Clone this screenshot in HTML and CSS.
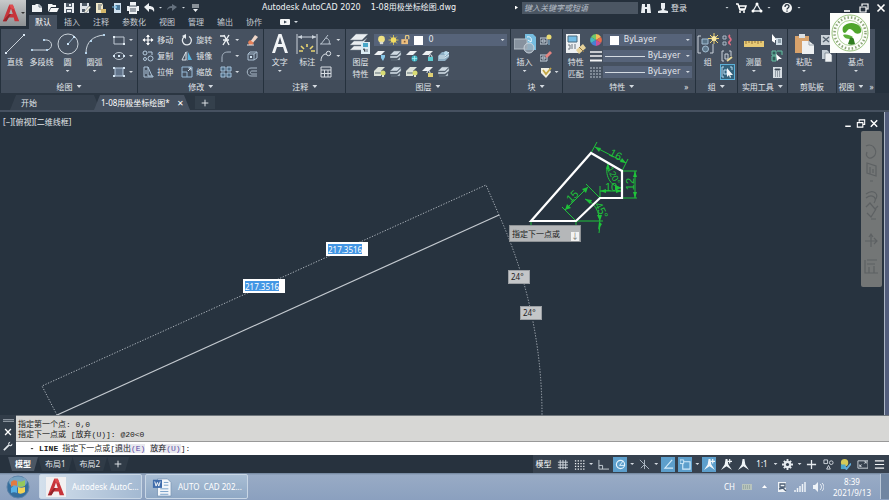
FILE: index.html
```html
<!DOCTYPE html>
<html lang="zh-CN">
<head>
<meta charset="utf-8">
<meta name="viewport" content="width=device-width, initial-scale=1">
<title>Autodesk AutoCAD 2020</title>
<link rel="stylesheet" href="styles.css">
</head>
<body>
<svg class="sprite" aria-hidden="true">
  <symbol id="new" viewBox="0 0 12 12"><path d="M1 3h3l1-1h3l3 3v5H1z" fill="#eef1f4"/><path d="M8 2v3h3" fill="none" stroke="#6b7684"/></symbol>
  <symbol id="open" viewBox="0 0 12 12"><path d="M1 10V2h4l1 1h3v2H4z" fill="#f4f5f6"/><path d="M4 6h8l-2 4H2z" fill="#f4f5f6"/></symbol>
  <symbol id="save" viewBox="0 0 12 12"><path d="M1 1h10v10H1z" fill="#e9edf1"/><path d="M3 1h6v4H3zM3 7h6v4H3z" fill="#4d5966"/><path d="M6 2h2v2H6zM4 8h4v2H4z" fill="#e9edf1"/></symbol>
  <symbol id="saveas" viewBox="0 0 12 12"><path d="M1 1h9v10H1z" fill="#dfe4e9"/><path d="M3 1h5v3H3zM3 7h3v3H3z" fill="#4d5966"/><path d="M5 10l5-6 2 1-5 6z" fill="#f2f0df" stroke="#4d5966" stroke-width=".5"/></symbol>
  <symbol id="webopen" viewBox="0 0 12 12"><path d="M1 1h6l1 2v8H1z" fill="#f0e8c9"/><path d="M3 3h4M3 5h3M3 7h3" stroke="#59636e"/><path d="M6 7h5v4H6z" fill="#d4b76a"/></symbol>
  <symbol id="websave" viewBox="0 0 12 12"><path d="M3 1h7v10H3z" fill="#cfe0ee"/><path d="M5 3h4v5H5z" fill="#4c7898"/><path d="M1 5h5M4 3l2 2-2 2" fill="none" stroke="#75b7df"/></symbol>
  <symbol id="print" viewBox="0 0 12 12"><path d="M3 0h6v4H3zM0 4h12v5H0zM2 8h8v4H2z" fill="#eef1f4"/><path d="M2 4h8M3 9h6M3 7h6" stroke="#485462"/></symbol>
  <symbol id="undo" viewBox="0 0 12 12"><path d="M1 5l5-4v3c4 0 6 2 5 6-1-2-2-3-5-3v3z" fill="#eef1f4"/></symbol>
  <symbol id="redo" viewBox="0 0 12 12"><path d="M11 5L6 2v2C3 4 1 6 1 8c2-2 3-2 5-2v3z" fill="#65717e"/></symbol>
  <symbol id="more" viewBox="0 0 12 12"><path d="M3 3h7M3 5h7" stroke="#eef1f4"/><path d="M4 7h5l-2.500 3z" fill="#eef1f4"/></symbol>
  <symbol id="find" viewBox="0 0 12 12"><path d="M2 2h3v3h2V2h3l1 9H7V7H5v4H1z" fill="#e9edf1"/></symbol>
  <symbol id="user" viewBox="0 0 12 12"><path d="M4 1h4v5l-1 2 4 1v2H1V9l4-1-1-2z" fill="#e9edf1"/></symbol>
  <symbol id="cart" viewBox="0 0 12 12"><path d="M1 2h2l2 6h5M3 4h8l-1 3H4" fill="none" stroke="#fff" stroke-width="1.500"/><circle cx="5" cy="10" r="1" fill="#fff"/><circle cx="9" cy="10" r="1" fill="#fff"/></symbol>
  <symbol id="app" viewBox="0 0 12 12"><path d="M6 2L2 9h8z" fill="none" stroke="#e9edf1" stroke-width="1.300"/><circle cx="6" cy="2" r="1.500" fill="#fff"/><circle cx="2" cy="9" r="1.500" fill="#fff"/><circle cx="10" cy="9" r="1.500" fill="#fff"/></symbol>
  <symbol id="help" viewBox="0 0 12 12"><circle cx="6" cy="6" r="5" fill="#f4f5f6"/><path d="M4 5c0-3 4-3 4-.500C8 6 6 6 6 7.500M6 8.500v1.200" fill="none" stroke="#27323e" stroke-width="1.300"/></symbol>
  <symbol id="min" viewBox="0 0 12 12"><path d="M3 9h6" stroke="#fff" stroke-width="1.600"/></symbol>
  <symbol id="restore" viewBox="0 0 12 12"><path d="M4 4V2h6v5H8M2 5h6v5H2z" fill="none" stroke="#fff" stroke-width="1.200"/></symbol>
  <symbol id="close" viewBox="0 0 12 12"><path d="M2.500 2.500l7 7M9.500 2.500l-7 7" stroke="#fff" stroke-width="1.600"/></symbol>
  <symbol id="cam" viewBox="0 0 12 12"><rect x="1" y="3" width="10" height="6" rx="1" fill="#f4f5f6"/><path d="M5 4.500l3 1.500-3 1.500z" fill="#3a4653"/></symbol>

  <symbol id="line" viewBox="0 0 22 22"><path d="M2 20L20 2" stroke="#c9d1d9"/><path d="M1 19h2v2H1zM19 1h2v2h-2z" fill="#dce9f5"/></symbol>
  <symbol id="pline" viewBox="0 0 22 22"><path d="M1 17h15c6-1 6-9 0-10h-3" fill="none" stroke="#c9d1d9"/><path d="M0 16h2v2H0zM15 16h2v2h-2zM12 6h2v2h-2z" fill="#b4d2ea"/></symbol>
  <symbol id="circle" viewBox="0 0 22 22"><circle cx="11" cy="11" r="10" fill="none" stroke="#c9d1d9"/><path d="M11 11l6-7" stroke="#9ebcd4"/><path d="M10 10h2v2h-2zM16 3h2v2h-2z" fill="#cde6fa"/></symbol>
  <symbol id="arc" viewBox="0 0 22 22"><path d="M2 20C2 9 9 3 20 2" fill="none" stroke="#c9d1d9"/><path d="M1 19h2v2H1zM6 7h2v2H6zM19 1h2v2h-2z" fill="#b4d2ea"/></symbol>
  <symbol id="rect" viewBox="0 0 12 12"><path d="M1 3h10v7H1z" fill="none" stroke="#c0cad4"/><path d="M0 2h2v2H0zM10 9h2v2h-2z" fill="#e3edf5"/></symbol>
  <symbol id="ellipse" viewBox="0 0 12 12"><ellipse cx="6" cy="6" rx="5" ry="3.500" fill="none" stroke="#c0cad4"/><path d="M5 5h2v2H5zM0 5h2v2H0zM10 5h2v2h-2z" fill="#d5e6f4"/></symbol>
  <symbol id="hatch" viewBox="0 0 12 12"><path d="M2 2h8v8H2z" fill="#61738a" stroke="#b3c6d9"/><path d="M0 1h2v2H0zM10 1h2v2h-2zM0 9h2v2H0zM10 9h2v2h-2z" fill="#d5e6f4"/></symbol>
  <symbol id="move" viewBox="0 0 12 12"><path d="M6 1v10M1 6h10" stroke="#fff" stroke-width="1.200"/><path d="M4 3l2-2.500L8 3zM4 9l2 2.500L8 9zM3 4L.5 6 3 8zM9 4l2.500 2L9 8z" fill="#fff"/></symbol>
  <symbol id="rotate" viewBox="0 0 12 12"><path d="M8 2.500A4.500 4.500 0 1 1 3 3" fill="none" stroke="#e5eaee" stroke-width="1.300"/><path d="M5 0v5L1 2z" fill="#e5eaee"/></symbol>
  <symbol id="copy" viewBox="0 0 12 12"><g fill="none" stroke="#b6ccdf"><circle cx="3" cy="3" r="2"/><circle cx="8.500" cy="8.500" r="2.500"/><circle cx="3" cy="9" r="1.500"/><path d="M6 2h4v3"/></g></symbol>
  <symbol id="mirror" viewBox="0 0 12 12"><path d="M5 2v8H1z" fill="none" stroke="#dce3e9"/><path d="M7 2v8h4z" fill="#56b4df"/><path d="M6 1v10" stroke="#b7c7d4" stroke-width=".6"/></symbol>
  <symbol id="stretch" viewBox="0 0 12 12"><path d="M2 1h4v9h5v1H2zM6 1l4 9M4 4v4" fill="none" stroke="#aec6db"/></symbol>
  <symbol id="scale" viewBox="0 0 12 12"><path d="M1 1h10v10H1zM1 6h5v5" fill="none" stroke="#95bad7"/><path d="M7 5l3-3M7.500 2H10v2.500" stroke="#d5e6f4" fill="none"/></symbol>
  <symbol id="trim" viewBox="0 0 12 12"><path d="M0 2h4M4 1l5 10M9 1L6 6l-3 5M3 6h6" fill="none" stroke="#edf1f4" stroke-width="1.400"/></symbol>
  <symbol id="fillet" viewBox="0 0 12 12"><path d="M2 12V8c0-4 2-6 6-6h3" fill="none" stroke="#aab8c6"/></symbol>
  <symbol id="array" viewBox="0 0 12 12"><path d="M1 1h4v4H1zM7 1h4v4H7zM1 7h4v4H1zM7 7h4v4H7z" fill="#4d6b84" stroke="#a4c2db"/></symbol>
  <symbol id="erase" viewBox="0 0 12 12"><path d="M4 8l5-7 3 2-6 7z" fill="#eed6c8"/><path d="M2 8l2-2 4 3-2 2H3z" fill="#e47f58"/><path d="M1 11h7" stroke="#e8e8e8"/></symbol>
  <symbol id="explode" viewBox="0 0 12 12"><path d="M2 4h6v6H2zM2 4l2-2h7l-3 2M11 2v6l-3 2" fill="none" stroke="#a9bed0"/><path d="M4 6h2v2H4z" fill="#d4e6f4"/></symbol>
  <symbol id="offset" viewBox="0 0 12 12"><path d="M11 2H5C0 2 0 10 5 10h6M11 5H6C4 5 4 8 6 8h5" fill="none" stroke="#a9b9c8"/></symbol>
  <symbol id="text" viewBox="0 0 22 22"><path d="M3 20L9.500 1h3L19 20h-3l-2-6H8l-2 6zm6-9h4l-2-7z" fill="#f1f4f6"/></symbol>
  <symbol id="dim" viewBox="0 0 22 22"><path d="M1 1v20M21 1v20M2 4h18" stroke="#cbd3db"/><path d="M2 4l4-2v4zM20 4l-4-2v4z" fill="#cbd3db"/><path d="M11 11v3M5 13l3 3M17 13l-3 3M3 18h4M15 18h4" stroke="#e9d572" stroke-width="1.600"/></symbol>
  <symbol id="angular" viewBox="0 0 12 12"><path d="M1 10L8 1M0 10h11M6 4c3 1 4 3 3 6" fill="none" stroke="#b9c4cf"/></symbol>
  <symbol id="leader" viewBox="0 0 12 12"><path d="M1 11c0-4 2-7 5-7" fill="none" stroke="#dce2e8"/><circle cx="8.500" cy="3.500" r="2.200" fill="none" stroke="#dce2e8"/></symbol>
  <symbol id="table" viewBox="0 0 12 12"><path d="M1 1h10v10H1zM1 4h10M1 7.500h10M4.500 4v7M8 4v7" fill="none" stroke="#d7dde3"/></symbol>
  <symbol id="layers" viewBox="0 0 22 22"><path d="M1 7l6-6h12l-6 6zM1 12l4-4h9l4-3-5 7zM1 17l4-4h8v4z" fill="#e9edf0" stroke="#7b8793" stroke-width=".5"/><path d="M12 9h9v12h-9z" fill="#dcecf4"/><path d="M14 10h5v4h-5z" fill="#48a7c9"/><path d="M14 16h2v3M18 16v3" stroke="#687581"/></symbol>
  <symbol id="bulb" viewBox="0 0 12 12"><circle cx="6" cy="5" r="4" fill="#f0e283"/><path d="M4 8h4v3H4z" fill="#d9dad1"/></symbol>
  <symbol id="sun" viewBox="0 0 12 12"><path d="M6 0v12M0 6h12M2 2l8 8M10 2l-8 8" stroke="#dec95a"/><circle cx="6" cy="6" r="3.300" fill="#f2dc62"/></symbol>
  <symbol id="lock" viewBox="0 0 12 12"><path d="M6 5V2c0-2 4-2 4 0v3" fill="none" stroke="#e6c880" stroke-width="1.500"/><path d="M1 5h8v6H1z" fill="#eec080"/><path d="M4 7h2v2H4z" fill="#845d33"/></symbol>
  <symbol id="layA" viewBox="0 0 12 12"><path d="M0 5l4-4h7L7 5z" fill="#edf1f3"/><path d="M7 5h4v2L9 11 7 8z" fill="#87c8e9"/></symbol>
  <symbol id="layB" viewBox="0 0 12 12"><path d="M0 5l4-4h7L7 5zM0 8V6h7l4-4v3L7 8zM1 10h6l3-3v3H2z" fill="#cfdae3" stroke="#647583" stroke-width=".5"/></symbol>
  <symbol id="layC" viewBox="0 0 12 12"><path d="M0 5l4-4h7L7 5z" fill="#edf1f3"/><circle cx="8.500" cy="8.500" r="3" fill="#43b8c8"/><path d="M8.500 6v5M6 8.500h5" stroke="#b3f1f2" stroke-width=".7"/></symbol>
  <symbol id="layD" viewBox="0 0 12 12"><path d="M0 5l4-4h7L7 5z" fill="#edf1f3"/><path d="M6 7h5v4H6z" fill="#5ccbd1"/><path d="M7 7c0-3 3-3 3 0" stroke="#e6eef2" fill="none"/></symbol>
  <symbol id="layE" viewBox="0 0 12 12"><path d="M0 6l4-4h7v5l-4 4H0z" fill="#8daec4"/><path d="M1 6h6l4-4M1 8h6l4-3" stroke="#d9e9f2" fill="none"/><circle cx="8" cy="3" r="2" fill="#b6d8eb"/></symbol>
  <symbol id="layF" viewBox="0 0 12 12"><path d="M0 5l4-4h7L7 5v5H0z" fill="#dce2da"/><path d="M1 7h6" stroke="#5c6c73"/><circle cx="9" cy="7" r="2.500" fill="#d9dc75"/><path d="M8 9h2v2H8z" fill="#e0e2ce"/></symbol>
  <symbol id="layG" viewBox="0 0 12 12"><path d="M0 5l4-4h7L7 5z" fill="#edf1f3"/><path d="M6 7h5v4H6z" fill="#dfd075"/><path d="M5 7c0-3 3-3 3 0" stroke="#e6eef2" fill="none"/></symbol>
  <symbol id="insert" viewBox="0 0 22 22"><path d="M11 1h8l3 3v13H11z" fill="#76bde0"/><path d="M0 6h13v10H0z" fill="#87929f" stroke="#b3bec7"/><circle cx="15" cy="15" r="5" fill="#9ca9b6" fill-opacity=".75" stroke="#c9d3dc"/><path d="M13 4c4-1 5 2 4 5l-3-2" fill="none" stroke="#eff8fd"/></symbol>
  <symbol id="blkA" viewBox="0 0 12 12"><path d="M0 4h7v6H0zM2 6h3v2H2z" fill="none" stroke="#c6d1db"/><circle cx="9" cy="3" r="2.500" fill="#eadb74"/><path d="M9 6v5" stroke="#87bee0"/></symbol>
  <symbol id="blkB" viewBox="0 0 12 12"><path d="M0 5h7v6H0zM2 7h3v2H2z" fill="none" stroke="#c6d1db"/><path d="M5 6l5-5 2 2-5 5z" fill="#e48480"/></symbol>
  <symbol id="blkC" viewBox="0 0 12 12"><path d="M1 2h8l2 4-5 6-5-5z" fill="#f1efe2"/><path d="M3 4l3 4 5-6" fill="none" stroke="#c4a747" stroke-width="1.800"/></symbol>
  <symbol id="match" viewBox="0 0 22 22"><path d="M1 1h14v19H1z" fill="#edf0f2"/><path d="M3 3h9v6H3z" fill="#73bce4" stroke="#4a687d"/><path d="M3 12h2v4H3M7 11v5M10 11v5" stroke="#6a747e" fill="none"/><path d="M11 17l7-6 3 4-7 6z" fill="#e7d29a"/><path d="M14 14l5 5" stroke="#927441"/></symbol>
  <symbol id="wheel" viewBox="0 0 12 12"><path d="M6 6V0a6 6 0 0 1 5 3z" fill="#f4bd59"/><path d="M6 6l5-3a6 6 0 0 1 0 6z" fill="#e96c48"/><path d="M6 6l5 3a6 6 0 0 1-5 3z" fill="#c95198"/><path d="M6 6v6a6 6 0 0 1-5-3z" fill="#477fd4"/><path d="M6 6L1 9a6 6 0 0 1 0-6z" fill="#44bac1"/><path d="M6 6L1 3a6 6 0 0 1 5-3z" fill="#74c769"/></symbol>
  <symbol id="weight" viewBox="0 0 12 12"><path d="M0 2h12M0 6h12" stroke="#f3f4f5" stroke-width="1.500"/><path d="M0 10.500h12" stroke="#f3f4f5" stroke-width="2"/></symbol>
  <symbol id="ltype" viewBox="0 0 12 12"><path d="M0 2h12M0 5h12M0 8h12M0 11h12" stroke="#bac4ce" stroke-dasharray="2 1"/></symbol>
  <symbol id="group" viewBox="0 0 22 22"><path d="M4 3H1v17h3M13 20h3V11" fill="none" stroke="#cbd3db"/><path d="M5 6h6v5H5z" fill="#5b7588" stroke="#a4bfd3"/><circle cx="8.500" cy="16" r="3" fill="#60798c" stroke="#a4bfd3"/><path d="M17 0v11M11 5.500h11M13 2l8 8M21 2l-8 8" stroke="#f0d36f"/><circle cx="17" cy="5.500" r="2.500" fill="#f8e8a2"/></symbol>
  <symbol id="grpA" viewBox="0 0 12 12"><path d="M2 2h3v3H2zM2 8h3v3H2z" fill="none" stroke="#aabac7"/><path d="M9 1c-3 2 3 4 0 6s1 3 0 4" fill="none" stroke="#dd6e83" stroke-width="1.800"/></symbol>
  <symbol id="grpB" viewBox="0 0 12 12"><path d="M3 1H1v10h2M8 1h2v5M4 4h3v5H4z" fill="none" stroke="#c9d1d9"/><path d="M6 11l5-4" stroke="#e9d998" stroke-width="1.800"/></symbol>
  <symbol id="grpC" viewBox="0 0 12 12"><path d="M3 1H1v10h2M9 1h2v3M3 4h3v4H3z" fill="none" stroke="#b6d9f1"/><path d="M6 2v9l2-2 1 3 1-1-1-2h3z" fill="#f5f7f8"/></symbol>
  <symbol id="measure" viewBox="0 0 22 22"><path d="M1 8h20v6H1z" fill="#e8ca75"/><path d="M3 8v3M6 8v2M9 8v3M12 8v2M15 8v3M18 8v2" stroke="#93733b"/></symbol>
  <symbol id="utilA" viewBox="0 0 12 12"><path d="M1 0l5 6H4v3L1 7z" fill="#fff"/><path d="M5 4h6v7H5z" fill="#cbd9e3"/><path d="M7 6h3M7 8h3" stroke="#4e616f"/></symbol>
  <symbol id="utilB" viewBox="0 0 12 12"><path d="M1 1h4v4H1zM6 1h5v4M1 6h4v5H1z" fill="#335e5b" stroke="#69bfa4"/><path d="M5 4l6 5H8l-2 2z" fill="#fff"/></symbol>
  <symbol id="calc" viewBox="0 0 12 12"><path d="M2 1h9v11H2z" fill="#d8dee4"/><path d="M4 3h5v1H4zM4 6h1M6 6h1M8 6h1M4 8h1M6 8h1M8 8h1M4 10h1M6 10h1M8 10h1" stroke="#4d5b68"/></symbol>
  <symbol id="paste" viewBox="0 0 22 22"><path d="M2 3h14v17H2z" fill="#d8a26b"/><path d="M6 1h6v4H6z" fill="#dce0e3"/><path d="M9 8h7l5 4v9H9z" fill="#eef0f1"/><path d="M16 8v4h5" fill="none" stroke="#9ca5ad"/></symbol>
  <symbol id="cut" viewBox="0 0 12 12"><path d="M0 1h9v10H0z" fill="#cbd2d9"/><path d="M2 3l6 5M8 3L2 8" stroke="#53606d" stroke-width="1.300"/></symbol>
  <symbol id="copyclip" viewBox="0 0 12 12"><path d="M1 0h5l2 2v7H1z" fill="#c4cdd5"/><path d="M4 3h5l2 2v7H4z" fill="#eef1f3" stroke="#596673" stroke-width=".6"/></symbol>

  <symbol id="grid" viewBox="0 0 12 12"><path d="M3.500 1v10M6.500 1v10M9.500 1v10M1 3.500h11M1 6.500h11M1 9.500h11" stroke="#d4dbe1"/></symbol>
  <symbol id="dots" viewBox="0 0 12 12"><path d="M1 2h11M1 5h11M1 8h11M1 11h11" stroke="#eef1f3" stroke-width="1.400" stroke-dasharray="1.400 1.600"/></symbol>
  <symbol id="ortho" viewBox="0 0 12 12"><path d="M1 1v10h11M1 7h4v4" fill="none" stroke="#cbd3da"/></symbol>
  <symbol id="polar" viewBox="0 0 12 12"><circle cx="6" cy="6" r="4.500" fill="none" stroke="#e5f3fc" stroke-width="1.200"/><path d="M5 7h6M5 7l4-5" stroke="#e5f3fc"/></symbol>
  <symbol id="iso" viewBox="0 0 12 12"><path d="M1 1l10 10M6 1v10M6 6l-4 4" stroke="#b1bdc8"/></symbol>
  <symbol id="track" viewBox="0 0 12 12"><path d="M10 1L2 10h9" fill="none" stroke="#d4ecfa" stroke-width="1.200"/></symbol>
  <symbol id="osnap" viewBox="0 0 12 12"><path d="M3 3h8v8H3z" fill="none" stroke="#d4ecfa" stroke-width="1.200"/><path d="M0 1h4v4H0z" fill="#5d9fcc" stroke="#d4ecfa"/></symbol>
  <symbol id="anno" viewBox="0 0 12 12"><path d="M5 0h2l1 6 4 6-6-4-6 4 4-6z" fill="#f1f6f9"/></symbol>
  <symbol id="annoAuto" viewBox="0 0 12 12"><path d="M5 0h2l1 6 4 6-6-4-6 4 4-6z" fill="#f1f6f9"/><path d="M9.500 0v5M7 2.500h5" stroke="#f1f6f9" stroke-width="1.300"/></symbol>
  <symbol id="gear" viewBox="0 0 12 12"><path d="M6 0v12M0 6h12M2 2l8 8M10 2l-8 8" stroke="#e5eaee" stroke-width="2"/><circle cx="6" cy="6" r="4" fill="#e5eaee"/><circle cx="6" cy="6" r="1.700" fill="#35414e"/></symbol>
  <symbol id="plus" viewBox="0 0 12 12"><path d="M6 1v10M1 6h10" stroke="#e5eaee" stroke-width="1.400"/></symbol>
  <symbol id="isolate" viewBox="0 0 12 12"><path d="M1 1h4v4H1zM4 11l2-4 2 4z" fill="none" stroke="#d4dbe1"/><circle cx="9" cy="4" r="2" fill="none" stroke="#d4dbe1"/></symbol>
  <symbol id="perf" viewBox="0 0 12 12"><circle cx="5" cy="4" r="4" fill="#d5ca58"/><path d="M1 6h5v5H1z" fill="#4ba6c8"/><path d="M5 8l2 3 5-6" fill="none" stroke="#5faad9" stroke-width="2"/></symbol>
  <symbol id="full" viewBox="0 0 12 12"><path d="M1 2h11v8H1z" fill="none" stroke="#d4dbe1"/><path d="M3 8l2-2M8 5l2-2M3 6v2h2M8 3h2v2" fill="none" stroke="#d4dbe1"/></symbol>
  <symbol id="menu" viewBox="0 0 12 12"><path d="M1 2h10M1 6h10M1 10h10" stroke="#f3f5f6" stroke-width="1.300"/></symbol>
  <symbol id="wrench" viewBox="0 0 12 12"><path d="M1 11l6-6" stroke="#e5eaee" stroke-width="2"/><path d="M9 1C5 1 6 6 8 6c2 1 4-1 3-3L9 5 7 4z" fill="#e5eaee"/></symbol>
  <symbol id="keyb" viewBox="0 0 12 12"><path d="M1 3h10v6H1z" fill="#b8c4bd"/><path d="M2 5h8M2 7h8" stroke="#7f928f" stroke-dasharray="1 1"/></symbol>
  <symbol id="action" viewBox="0 0 12 12"><path d="M2 1h8v10H2z" fill="#eef2f6"/><path d="M4 3h5v3H4zM3 8l4-1 3 3" stroke="#4e6077" fill="none" stroke-width="1.300"/></symbol>
  <symbol id="signal" viewBox="0 0 12 12"><path d="M1 11V9M3.500 11V7M6 11V5M8.500 11V3M11 11V1" stroke="#edf2f7" stroke-width="1.500"/></symbol>
  <symbol id="vol" viewBox="0 0 12 12"><path d="M1 4h2l3-3v10L3 8H1z" fill="#edf2f7"/><path d="M8 3c2 2 2 4 0 6M10 2c3 3 2 6 0 8" fill="none" stroke="#edf2f7"/></symbol>
  <symbol id="cad" viewBox="0 0 22 22"><path d="M2 20L9 2h4l7 18h-5l-1-4H8l-2 4zM9 12h4l-2-6z" fill="#c7343a"/><path d="M2 20l7-8h2l-5 8z" fill="#94252b"/><path d="M9 2h4l2 5-4-1z" fill="#df4c50"/></symbol>
</svg>

<main class="window">
  <header class="top">
    <button class="logo" aria-label="应用程序菜单"><svg><use href="#cad"/></svg><i class="caret dark"></i></button>
    <div class="titlebar">
      <nav class="quick" aria-label="快速访问">
        <button aria-label="新建"><svg><use href="#new"/></svg></button>
        <button aria-label="打开"><svg><use href="#open"/></svg></button>
        <button aria-label="保存"><svg><use href="#save"/></svg></button>
        <button aria-label="另存为"><svg><use href="#saveas"/></svg></button>
        <button aria-label="从网络打开"><svg><use href="#webopen"/></svg></button>
        <button aria-label="保存到网络"><svg><use href="#websave"/></svg></button>
        <button aria-label="打印"><svg><use href="#print"/></svg></button>
        <button class="wide" aria-label="放弃"><svg><use href="#undo"/></svg><i class="caret"></i></button>
        <button class="wide" aria-label="重做"><svg><use href="#redo"/></svg><i class="caret"></i></button>
        <button aria-label="自定义"><svg><use href="#more"/></svg></button>
      </nav>
      <h1><span>Autodesk AutoCAD 2020</span><span>1-08用极坐标绘图.dwg</span></h1>
      <div class="account">
        <i class="play"></i>
        <input class="search" type="search" placeholder="键入关键字或短语" aria-label="搜索">
        <button aria-label="搜索"><svg><use href="#find"/></svg></button>
        <button class="login"><svg><use href="#user"/></svg>登录</button>
        <button class="drop" aria-label="登录菜单"><i class="caret"></i></button>
        <button class="shop" aria-label="商店"><svg><use href="#cart"/></svg></button>
        <button class="wide" aria-label="应用"><svg><use href="#app"/></svg><i class="caret"></i></button>
        <button class="wide help" aria-label="帮助"><svg><use href="#help"/></svg><i class="caret"></i></button>
        <div class="winctl">
          <button aria-label="最小化"><svg><use href="#min"/></svg></button>
          <button aria-label="还原"><svg><use href="#restore"/></svg></button>
          <button aria-label="关闭"><svg><use href="#close"/></svg></button>
        </div>
      </div>
    </div>
    <nav class="tabs" aria-label="功能区">
      <button class="on">默认</button><button>插入</button><button>注释</button><button>参数化</button><button>视图</button><button>管理</button><button>输出</button><button>协作</button>
      <button class="cam" aria-label="显示面板"><svg><use href="#cam"/></svg><i class="caret"></i></button>
    </nav>
  </header>

  <div class="ribbon">
    <section class="panel draw">
      <div class="body">
        <button class="big"><svg><use href="#line"/></svg>直线</button>
        <button class="big"><svg><use href="#pline"/></svg>多段线</button>
        <button class="big"><svg><use href="#circle"/></svg>圆<i class="caret"></i></button>
        <button class="big"><svg><use href="#arc"/></svg>圆弧<i class="caret"></i></button>
        <div class="stack">
          <button aria-label="矩形"><svg><use href="#rect"/></svg><i class="caret"></i></button>
          <button aria-label="椭圆"><svg><use href="#ellipse"/></svg><i class="caret"></i></button>
          <button aria-label="图案填充"><svg><use href="#hatch"/></svg><i class="caret"></i></button>
        </div>
      </div>
      <h2>绘图<i class="caret big-caret"></i></h2>
    </section>
    <section class="panel modify">
      <div class="body">
        <div class="stack">
          <button><svg><use href="#move"/></svg>移动</button>
          <button><svg><use href="#copy"/></svg>复制</button>
          <button><svg><use href="#stretch"/></svg>拉伸</button>
        </div>
        <div class="stack">
          <button><svg><use href="#rotate"/></svg>旋转</button>
          <button><svg><use href="#mirror"/></svg>镜像</button>
          <button><svg><use href="#scale"/></svg>缩放</button>
        </div>
        <div class="stack">
          <button aria-label="修剪"><svg><use href="#trim"/></svg><i class="caret"></i></button>
          <button aria-label="圆角"><svg><use href="#fillet"/></svg><i class="caret"></i></button>
          <button aria-label="阵列"><svg><use href="#array"/></svg><i class="caret"></i></button>
        </div>
        <div class="stack">
          <button aria-label="删除"><svg><use href="#erase"/></svg></button>
          <button aria-label="分解"><svg><use href="#explode"/></svg></button>
          <button aria-label="偏移"><svg><use href="#offset"/></svg></button>
        </div>
      </div>
      <h2>修改<i class="caret big-caret"></i></h2>
    </section>
    <section class="panel annotate">
      <div class="body">
        <button class="big"><svg><use href="#text"/></svg>文字<i class="caret"></i></button>
        <button class="big"><svg><use href="#dim"/></svg>标注</button>
        <div class="stack">
          <button aria-label="角度"><svg><use href="#angular"/></svg><i class="caret"></i></button>
          <button aria-label="引线"><svg><use href="#leader"/></svg><i class="caret"></i></button>
          <button aria-label="表格"><svg><use href="#table"/></svg></button>
        </div>
      </div>
      <h2>注释<i class="caret big-caret"></i></h2>
    </section>
    <section class="panel layer">
      <div class="body">
        <button class="big"><svg><use href="#layers"/></svg><span>图层<br>特性</span></button>
        <div class="rows">
          <label class="combo"><svg><use href="#bulb"/></svg><svg><use href="#sun"/></svg><svg><use href="#lock"/></svg><i class="swatch"></i><select aria-label="图层"><option>0</option></select><i class="caret"></i></label>
          <div class="icons">
            <button aria-label="关闭图层"><svg><use href="#layA"/></svg></button><button aria-label="隔离"><svg><use href="#layB"/></svg></button><button aria-label="冻结"><svg><use href="#layC"/></svg></button><button aria-label="锁定"><svg><use href="#layD"/></svg></button><button aria-label="置为当前"><svg><use href="#layE"/></svg></button>
          </div>
          <div class="icons">
            <button aria-label="打开图层"><svg><use href="#layF"/></svg></button><button aria-label="取消隔离"><svg><use href="#layB"/></svg></button><button aria-label="解冻"><svg><use href="#layF"/></svg></button><button aria-label="解锁"><svg><use href="#layG"/></svg></button><button aria-label="匹配图层"><svg><use href="#layB"/></svg></button>
          </div>
        </div>
      </div>
      <h2>图层<i class="caret big-caret"></i></h2>
    </section>
    <section class="panel block">
      <div class="body">
        <button class="big"><svg><use href="#insert"/></svg>插入<i class="caret"></i></button>
        <div class="stack">
          <button aria-label="创建块"><svg><use href="#blkA"/></svg></button>
          <button aria-label="编辑块"><svg><use href="#blkB"/></svg></button>
          <button aria-label="编辑属性"><svg><use href="#blkC"/></svg><i class="caret"></i></button>
        </div>
      </div>
      <h2>块<i class="caret big-caret"></i></h2>
    </section>
    <section class="panel props">
      <div class="body">
        <button class="big"><svg><use href="#match"/></svg><span>特性<br>匹配</span></button>
        <div class="stack">
          <button aria-label="颜色"><svg><use href="#wheel"/></svg></button>
          <button aria-label="线宽"><svg><use href="#weight"/></svg></button>
          <button aria-label="线型"><svg><use href="#ltype"/></svg></button>
        </div>
        <div class="rows">
          <label class="combo"><i class="swatch"></i><select aria-label="对象颜色"><option>ByLayer</option></select><i class="caret"></i></label>
          <label class="combo"><i class="rule"></i><select aria-label="对象线宽"><option>ByLayer</option></select><i class="caret"></i></label>
          <label class="combo"><i class="rule"></i><select aria-label="对象线型"><option>ByLayer</option></select><i class="caret"></i></label>
        </div>
      </div>
      <h2>特性<i class="caret big-caret"></i><span class="launch">»</span></h2>
    </section>
    <section class="panel grp">
      <div class="body">
        <button class="big"><svg><use href="#group"/></svg>组</button>
        <div class="stack">
          <button aria-label="解除编组"><svg><use href="#grpA"/></svg></button>
          <button aria-label="组编辑"><svg><use href="#grpB"/></svg></button>
          <button class="hot" aria-label="组选择"><svg><use href="#grpC"/></svg></button>
        </div>
      </div>
      <h2>组<i class="caret big-caret"></i></h2>
    </section>
    <section class="panel util">
      <div class="body">
        <button class="big"><svg><use href="#measure"/></svg>测量<i class="caret"></i></button>
        <div class="stack">
          <button aria-label="快速选择"><svg><use href="#utilA"/></svg></button>
          <button aria-label="全部选择"><svg><use href="#utilB"/></svg></button>
          <button aria-label="计算器"><svg><use href="#calc"/></svg></button>
        </div>
      </div>
      <h2>实用工具<i class="caret big-caret"></i></h2>
    </section>
    <section class="panel clip">
      <div class="body">
        <button class="big"><svg><use href="#paste"/></svg>粘贴<i class="caret"></i></button>
        <div class="stack">
          <button aria-label="剪切"><svg><use href="#cut"/></svg></button>
          <button aria-label="复制到剪贴板"><svg><use href="#copyclip"/></svg></button>
        </div>
      </div>
      <h2>剪贴板</h2>
    </section>
    <section class="panel view">
      <div class="body">
        <button class="big"><svg></svg>基点<i class="caret"></i></button>
      </div>
      <h2>视图<i class="caret big-caret"></i><span class="launch">»</span></h2>
    </section>
  </div>
  <svg class="seal" viewBox="0 0 40 40" role="img" aria-label="徽标">
    <rect width="40" height="40" fill="#fdfefb"/>
    <circle cx="20" cy="20" r="18" fill="none" stroke="#7fb45c" stroke-width=".8"/>
    <circle cx="20" cy="20" r="15.500" fill="none" stroke="#8ea77a" stroke-width="2.500" stroke-dasharray="1.500 2"/>
    <circle cx="20" cy="20" r="12.500" fill="#fff" stroke="#8fc070" stroke-width=".7"/>
    <path d="M13 14c3-4 9-5 13-3 4 1 6 5 5 8-1 2-4 2-6 1-2-2-3-4-6-4-2 1-2 3-4 4-2 0-3-3-2-6z" fill="#4fa52c"/>
    <path d="M13 22c3-1 7 0 10 2l-3 2c-3 0-6-1-7-4z" fill="#5cae3a"/>
    <path d="M20 25c2-1 4 0 4 2l1 4c-2 1-5 1-7 0z" fill="#2f7c1f"/>
  </svg>

  <nav class="files" aria-label="文件">
    <button class="file">开始</button>
    <button class="file on">1-08用极坐标绘图*<span>✕</span></button>
    <button class="add" aria-label="新图形"><svg><use href="#plus"/></svg></button>
  </nav>

  <section class="canvas" aria-label="绘图区">
    <svg class="drawing" viewBox="0 112 889 303" preserveAspectRatio="xMinYMin meet">
      <path d="M57 415L499 215" stroke="#c3c9cf" stroke-width="1.200"/>
      <g fill="none" stroke="#a9b1b9" stroke-dasharray="1.300 1.500">
        <path d="M57 415L42 386 486 185 499 215"/>
        <path d="M499 215A485 485 0 0 1 542 415"/>
      </g>
      <g fill="none" stroke="#1fc23a">
        <path d="M591 153l6-11M622 171l6-12M595 147l31 16M622 171h15M622 198h15M635 171v27M600 198v-12M600 191h22M576 221l-14-14M600 198l-14-14M565 210l23-23M576 221h27M585 199c12 4 17 18 14 34M608 164c-4 10 2 23 14 24M531 221v6M576 221v6"/>
      </g>
      <path d="M595 147l6 1-2 4zM626 163l-6-1 2-4zM635 171l-2 6h4zM635 198l-2-6h4zM600 191l6-2v4zM622 191l-6-2v4zM565 210l2-6 4 4zM588 187l-6 2 4 4zM585 199l7 1-2 4zM600 221l-3-6h5zM608 163l2 7-4-1zM622 188l-7-3v5zM599 222l-1 8 4-6z" fill="#1fc23a"/>
      <g class="dims">
        <text transform="translate(614 158) rotate(28)">16</text>
        <text transform="translate(634 184) rotate(-90)">12</text>
        <text transform="translate(611 191)">10</text>
        <text transform="translate(575 199) rotate(-45)">15</text>
        <text transform="translate(598 212) rotate(63)">45°</text>
        <text class="small" transform="translate(611 177) rotate(62)">120°</text>
      </g>
      <path d="M531 221L591 153 622 171V198H600L576 221z" fill="none" stroke="#fff" stroke-width="2.200"/>
    </svg>
    <span class="viewlabel">[−][俯视][二维线框]</span>
    <div class="docctl">
      <button aria-label="最小化图形"><svg><use href="#min"/></svg></button>
      <button aria-label="还原图形"><svg><use href="#restore"/></svg></button>
      <button aria-label="关闭图形"><svg><use href="#close"/></svg></button>
    </div>
    <svg class="navbar" viewBox="0 0 21 156" role="img" aria-label="导航栏">
      <rect width="21" height="156" rx="2" fill="#737676"/>
      <g fill="none" stroke="#5d6163" stroke-width="1.200">
        <path d="M5 15c8-4 13 7 7 11-4 3-8-1-6-5"/>
        <path d="M6 32l9 3v10l-9-3zM9 36v7M12 38v4M9 50h3"/>
        <path d="M5 63c8-6 14 1 9 6M5 67c6-5 12 0 8 5M5 76l4-4 5 6 3-3M6 82l4 4 5-8M10 88h5"/>
        <path d="M10 103v13M4 110h12M8 106l2-3 2 3M13 107l3 3-3 3"/>
        <path d="M4 129v13h13M6 129h10M6 133h8M8 136v6M13 135v7"/>
      </g>
    </svg>
    <input class="dyn d1" value="217.3516" aria-label="长度">
    <input class="dyn d2" value="217.3516" aria-label="距离">
    <output class="angle a1">24°</output>
    <output class="angle a2">24°</output>
    <div class="tip">指定下一点或<i>↓</i></div>
  </section>

  <section class="command" aria-label="命令行">
    <div class="grip"><i></i><button aria-label="关闭命令行"><svg><use href="#close"/></svg></button><button aria-label="自定义命令行"><svg><use href="#wrench"/></svg></button></div>
    <div class="console">
      <p>指定第一个点: 0,0</p>
      <p>指定下一点或 [放弃(U)]: @20&lt;0</p>
      <label class="prompt"><i class="caret dark"></i><b>LINE</b><span>指定下一点或[<mark>退出<em>(E)</em></mark> <mark>放弃<em>(U)</em></mark>]:</span><input type="text" aria-label="命令"></label>
    </div>
  </section>

  <footer class="status">
    <nav class="layouts" aria-label="布局">
      <button class="on">模型</button><button>布局1</button><button>布局2</button><button aria-label="新建布局"><svg><use href="#plus"/></svg></button>
    </nav>
    <div class="toggles">
      <button class="word">模型</button>
      <button aria-label="栅格"><svg><use href="#grid"/></svg></button>
      <button aria-label="捕捉"><svg><use href="#dots"/></svg></button>
      <i class="caret"></i>
      <button aria-label="正交"><svg><use href="#ortho"/></svg></button>
      <button class="lit" aria-label="极轴追踪"><svg><use href="#polar"/></svg></button>
      <i class="caret"></i>
      <button aria-label="等轴测"><svg><use href="#iso"/></svg></button>
      <i class="caret"></i>
      <button class="lit" aria-label="对象捕捉追踪"><svg><use href="#track"/></svg></button>
      <button class="lit" aria-label="对象捕捉"><svg><use href="#osnap"/></svg></button>
      <i class="caret"></i>
      <button class="lit" aria-label="注释可见性"><svg><use href="#annoAuto"/></svg></button>
      <button aria-label="自动缩放"><svg><use href="#annoAuto"/></svg></button>
      <button aria-label="注释比例"><svg><use href="#anno"/></svg></button>
      <button class="word">1:1</button>
      <i class="caret"></i>
      <button aria-label="工作空间"><svg><use href="#gear"/></svg></button>
      <i class="caret"></i>
      <button aria-label="注释监视器"><svg><use href="#plus"/></svg></button>
      <button aria-label="隔离对象"><svg><use href="#isolate"/></svg></button>
      <button aria-label="硬件加速"><svg><use href="#perf"/></svg></button>
      <button aria-label="全屏显示"><svg><use href="#full"/></svg></button>
      <button aria-label="自定义状态栏"><svg><use href="#menu"/></svg></button>
    </div>
  </footer>
</main>

<footer class="taskbar">
  <button class="start" aria-label="开始">
    <svg viewBox="0 0 24 24"><circle cx="12" cy="12" r="11" fill="#356e9d" stroke="#5e83a8"/><ellipse cx="12" cy="7" rx="9" ry="5.500" fill="#94b9d2" opacity=".7"/><path d="M5 7c2-2 4-2 6-1v5c-2-1-4-1-6 1z" fill="#e27a40"/><path d="M12 6c2 1 4 1 7-1v6c-3 1-5 1-7 0z" fill="#95c85b"/><path d="M5 13c2-2 4-2 6-1v6c-2-1-4-1-6 0z" fill="#56b0e4"/><path d="M12 12c2 1 4 1 7 0v5c-3 2-5 2-7 1z" fill="#f4d455"/></svg>
  </button>
  <button class="task on"><svg class="cadicon"><use href="#cad"/></svg><span>Autodesk AutoC...</span></button>
  <button class="task">
    <svg viewBox="0 0 22 22"><path d="M6 2h11l4 4v15H6z" fill="#f3f6fa" stroke="#7d98b7"/><path d="M9 13h9M9 16h9M9 19h9M13 6h5M13 9h5" stroke="#6f9bc4"/><path d="M1 3h10v9H1z" fill="#3f6cab"/><path d="M3 5l1.500 5L6 6l1.500 4L9 5" fill="none" stroke="#fff"/></svg>
    <span>AUTO&nbsp; CAD 202...</span>
  </button>
  <div class="tray">
    <span>CH</span>
    <svg><use href="#keyb"/></svg>
    <i class="up"></i>
    <svg><use href="#action"/></svg>
    <svg><use href="#signal"/></svg>
    <svg><use href="#vol"/></svg>
    <time>8:39<br>2021/9/13</time>
    <button class="desk" aria-label="显示桌面"></button>
  </div>
</footer>
</body>
</html>
```

FILE: styles.css
```css
* { box-sizing: border-box; }

body {
  margin: 0;
  min-height: 100vh;
  display: flex;
  flex-direction: column;
  background: #25313d;
  color: #e2e6ea;
  font: 8px/12px "Noto Sans", "Noto Sans CJK SC", sans-serif;
}

button, input, select {
  margin: 0;
  padding: 0;
  border: 0;
  background: none;
  color: inherit;
  font: inherit;
  min-width: 0;
}

button {
  display: flex;
  align-items: center;
  justify-content: center;
  white-space: nowrap;
}

svg { display: block; flex: none; width: 12px; height: 12px; }
h1, h2, p { margin: 0; font: inherit; }
.sprite { position: absolute; width: 0; height: 0; }

.caret {
  flex: none;
  width: 4px;
  height: 2px;
  background: #d4dae0;
  clip-path: polygon(0 0, 100% 0, 50% 100%);
}
.caret.dark { background: #333; }
.big-caret { width: 5px; height: 3px; margin-left: 4px; }

.window {
  position: relative;
  flex: 1;
  display: flex;
  flex-direction: column;
}

/* Title bar and ribbon tabs */
.top {
  display: grid;
  grid-template-columns: 28px 1fr;
  grid-template-rows: 15px 14px;
  background: #25303c;
}
.logo {
  grid-row: 1 / 3;
  width: 26px;
  height: 26px;
  background: linear-gradient(#c8cacb, #8d9194);
}
.logo svg { width: 20px; height: 22px; }
.titlebar, .quick, .account, .winctl, .tabs { display: flex; align-items: center; }
.quick { padding-left: 1px; }
.quick button { width: 16px; height: 14px; }
.quick .wide { width: 23px; gap: 4px; }
h1 {
  display: flex;
  gap: 10px;
  margin-left: 59px;
  color: #f2f4f6;
  font: 8px/12px "DejaVu Sans", "Noto Sans CJK SC", sans-serif;
  white-space: nowrap;
}
.account { margin-left: auto; }
.play {
  width: 3px;
  height: 4px;
  margin-right: 4px;
  background: #fff;
  clip-path: polygon(0 0, 100% 50%, 0 100%);
}
.search {
  width: 116px;
  height: 12px;
  padding-left: 2px;
  background: #4b5663;
  font-style: italic;
}
.search::placeholder { color: #b5bdc6; opacity: 1; }
.account button { width: 16px; }
.account .login { width: 36px; gap: 2px; }
.account .drop { width: 39px; justify-content: flex-end; }
.account .shop { width: 18px; margin-left: 3px; }
.account .wide { width: 22px; gap: 4px; }
.account .help { margin-left: 8px; }
.winctl { margin-left: 37px; gap: 1px; }

.tabs { gap: 1px; padding-left: 1px; }
.tabs button { height: 14px; padding: 0 6px; color: #c6ccd2; }
.tabs .on { background: #465160; color: #fff; }
.tabs .cam { gap: 3px; padding-left: 10px; }

/* Ribbon */
.ribbon {
  display: flex;
  gap: 1px;
  padding-left: 1px;
  padding-right: 14px;
  height: 64px;
}
.panel {
  display: flex;
  flex-direction: column;
  background: #465160;
}
.body { flex: 1; display: grid; padding-top: 3px; }
.panel h2 {
  display: flex;
  align-items: center;
  justify-content: center;
  height: 13px;
  background: #414c5a;
  white-space: nowrap;
}
.draw { flex: 136 0 0; }
.draw .body { grid-template-columns: 28px 25px 27px 27px 1fr; }
.modify { flex: 125 0 0; }
.modify .body { grid-template-columns: 39px 39px 26px 1fr; padding-left: 3px; }
.annotate { flex: 81 0 0; }
.annotate .body { grid-template-columns: 31px 24px 1fr; }
.layer { flex: 163 0 0; }
.layer .body { grid-template-columns: 28px 1fr; }
.block { flex: 51 0 0; }
.block .body { grid-template-columns: 28px 1fr; }
.props { flex: 132 0 0; }
.props .body { grid-template-columns: 26px 14px 1fr; }
.grp { flex: 41 0 0; }
.grp .body { grid-template-columns: 24px 1fr; }
.util { flex: 49 0 0; }
.util .body { grid-template-columns: 32px 1fr; }
.clip { flex: 48 0 0; }
.clip .body { grid-template-columns: 32px 1fr; }
.view { flex: 38 0 0; }
.view .body { grid-template-columns: 1fr; }

.big {
  flex-direction: column;
  justify-content: flex-start;
  padding-top: 1px;
}
.big svg { width: 22px; height: 22px; margin-bottom: 1px; }
.big .caret { margin-top: 2px; }
.stack, .rows {
  display: grid;
  grid-template-rows: repeat(3, 16px);
}
.stack button { justify-content: flex-start; gap: 3px; padding-left: 1px; }
.stack .hot {
  width: 15px;
  background: #34627b;
  outline: 1px solid #5bb0d8;
  outline-offset: -1px;
}
.draw .stack { padding-left: 4px; }
.draw .stack button, .annotate .stack button { gap: 4px; }
.rows { align-items: center; padding-right: 3px; }
.icons { display: flex; gap: 4px; }
.combo {
  display: flex;
  align-items: center;
  gap: 1px;
  height: 12px;
  padding: 0 2px;
  background: #566379;
}
.combo svg { width: 11px; height: 10px; }
.combo select { flex: 1; height: 12px; padding-left: 4px; appearance: none; }
.swatch { width: 9px; height: 9px; margin-left: 2px; background: #fff; }
.rule { width: 40px; height: 1px; background: #d4dbe2; }
.combo select { font: 8px/12px "DejaVu Sans", sans-serif; }
.props .swatch { margin-left: 5px; }
.props .rule + select { padding-left: 2px; }
.launch { margin-left: 6px; }
.props .launch { margin-left: 50px; }
.props h2 { padding-left: 40px; }

.seal {
  position: absolute;
  top: 13px;
  right: 19px;
  width: 40px;
  height: 40px;
}

/* File tabs */
.files {
  display: flex;
  align-items: center;
  height: 19px;
  padding-top: 2px;
  padding-left: 10px;
  background: #2b3642;
  border-bottom: 2px solid #465160;
}
.file {
  width: 90px;
  height: 15px;
  justify-content: flex-start;
  padding-left: 11px;
  background: #36414e;
  clip-path: polygon(6px 0, calc(100% - 6px) 0, 100% 100%, 0 100%);
}
.file.on {
  width: 96px;
  margin-left: -6px;
  padding-left: 7px;
  gap: 7px;
  background: #465160;
  color: #fff;
}
.add { margin-left: 5px; width: 20px; height: 13px; background: #34404c; }
.add svg { width: 8px; height: 8px; }

/* Drawing area */
.canvas {
  position: relative;
  flex: 1;
  overflow: hidden;
  background: #27333f;
  border-right: 4px solid #535e7c;
}
.canvas::after {
  content: "";
  position: absolute;
  inset: 0 0 0 auto;
  width: 1px;
  background: #aeb8c6;
}
.drawing { position: absolute; top: 0; left: 0; width: 889px; height: 303px; }
.dims text { fill: #1fc23a; font: 11px "Liberation Sans", sans-serif; text-anchor: middle; }
.dims .small { font-size: 9px; }
.viewlabel { position: absolute; top: 4px; left: 3px; }
.docctl { position: absolute; top: 6px; right: 5px; display: flex; gap: 1px; }
.docctl svg { width: 12px; height: 11px; }
.navbar { position: absolute; top: 19px; right: 3px; width: 21px; height: 156px; }
.dyn {
  position: absolute;
  width: 42px;
  height: 14px;
  padding-left: 2px;
  background: linear-gradient(#4396e4, #4396e4) 2px 2px / 34px 10px no-repeat #fff;
  color: #fff;
}
.d1 { left: 326px; top: 130px; }
.d2 { left: 243px; top: 167px; }
.angle {
  position: absolute;
  width: 22px;
  height: 14px;
  padding-left: 2px;
  background: #c4c6c8;
  border: 1px solid #9b9fa3;
  color: #222;
}
.a1 { left: 508px; top: 158px; }
.a2 { left: 520px; top: 194px; }
.tip {
  position: absolute;
  left: 509px;
  top: 113px;
  width: 72px;
  height: 17px;
  display: flex;
  align-items: center;
  justify-content: space-between;
  padding: 0 1px 0 2px;
  background: #b5b7b9;
  border: 1px solid #8e9295;
  color: #222;
}
.tip i {
  align-self: flex-end;
  width: 8px;
  height: 9px;
  background: #f2f2f2;
  color: #777;
  font-style: normal;
  line-height: 8px;
  text-align: center;
}

/* Command line */
.command { display: flex; height: 40px; background: #323d49; }
.grip {
  width: 16px;
  display: flex;
  flex-direction: column;
  align-items: center;
  justify-content: space-between;
  padding: 4px 0;
}
.grip i { width: 11px; height: 3px; background: repeating-linear-gradient(#8a939d 0 1px, #4d5864 1px 2px); }
.grip svg { width: 10px; height: 10px; }
.console {
  flex: 1;
  display: flex;
  flex-direction: column;
  padding-top: 4px;
  background: #d7d7d5;
  border-top: 1px solid #6f767c;
  color: #222;
  font: 8px/10px "Liberation Mono", "Noto Sans CJK SC", monospace;
  white-space: nowrap;
}
.console p { height: 10px; padding-left: 2px; }
.prompt {
  display: flex;
  align-items: center;
  height: 14px;
  margin-top: auto;
  padding-left: 14px;
  background: #fff;
  border-top: 1px solid #999;
}
.prompt b { margin: 0 4px 0 5px; }
.prompt input { flex: 1; }
.prompt mark { background: #e8e8ee; color: inherit; }
.prompt em { color: #5546a5; font-style: normal; }

/* Status bar */
.status {
  display: flex;
  align-items: center;
  justify-content: space-between;
  height: 18px;
  background: #27323e;
}
.layouts { display: flex; height: 14px; padding-left: 8px; }
.layouts button { padding: 0 7px; background: #303b47; clip-path: polygon(0 0, 100% 0, calc(100% - 4px) 100%, 4px 100%); }
.layouts .on { background: #4c5764; color: #fff; font-weight: bold; }
.layouts svg { width: 8px; height: 8px; }
.toggles {
  display: flex;
  align-items: center;
  justify-content: space-between;
  width: 356px;
  height: 18px;
  padding: 0 2px;
  background: #36414e;
}
.toggles button { width: 14px; height: 15px; }
.toggles .word { width: 17px; color: #fff; }
.toggles svg { width: 11px; height: 11px; }
.toggles .lit { background: #5d9fcc; }

/* Taskbar */
.taskbar {
  display: flex;
  align-items: center;
  gap: 3px;
  height: 27px;
  padding-left: 6px;
  background: linear-gradient(#6d8198, #98abc5 2px, #8ba0bf);
}
.start { width: 30px; justify-content: flex-start; }
.start svg { width: 24px; height: 24px; }
.task {
  width: 103px;
  height: 25px;
  justify-content: flex-start;
  gap: 6px;
  padding-left: 6px;
  background: linear-gradient(#a9bed4, #8fa8c5);
  border: 1px solid #c8d6e5;
  border-radius: 2px;
  color: #fff;
}
.task.on { background: linear-gradient(100deg, #d4e0ec, #a3b9d2); }
.task svg { width: 20px; height: 20px; }
.task .cadicon { background: #f2f0f1; }
.tray {
  margin-left: auto;
  display: flex;
  align-items: center;
  gap: 4px;
  color: #fff;
}
.up { width: 5px; height: 3px; margin: 0 5px; background: #fff; clip-path: polygon(50% 0, 100% 100%, 0 100%); }
.tray > span { margin-right: 2px; }
.tray svg + svg { margin-left: 2px; }
.tray time { width: 48px; line-height: 11px; text-align: center; }
.desk { width: 9px; height: 25px; background: #7086a2; border-left: 1px solid #b8c7d8; }
```
